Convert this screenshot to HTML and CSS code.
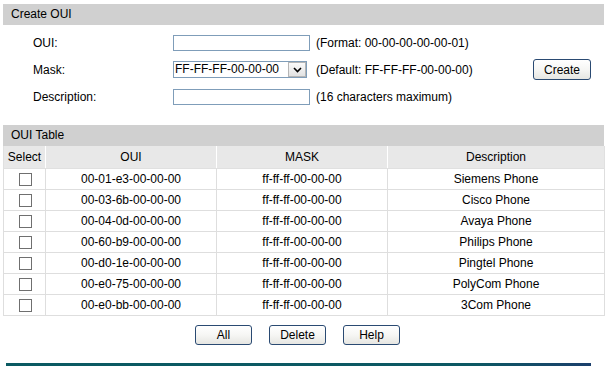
FILE: index.html
```html
<!DOCTYPE html>
<html>
<head>
<meta charset="utf-8">
<title>OUI Config</title>
<link rel="stylesheet" href="styles.css">
</head>
<body>
<div class="page">
  <div class="bar">Create OUI</div>
  <div class="form">
    <label class="lbl">OUI:</label>
    <div><input class="txt" type="text"></div>
    <div class="hint">(Format: 00-00-00-00-00-01)</div>
    <div></div>

    <label class="lbl">Mask:</label>
    <div>
      <span class="select-wrap">
        <select class="sel"><option>FF-FF-FF-00-00-00</option></select>
        <span class="arrow"><svg width="9" height="6" viewBox="0 0 9 6"><path d="M1 1 L4.5 4.5 L8 1" fill="none" stroke="#000" stroke-width="1.6"/></svg></span>
      </span>
    </div>
    <div class="hint">(Default: FF-FF-FF-00-00-00)</div>
    <div><button class="btn btn-create">Create</button></div>

    <label class="lbl">Description:</label>
    <div><input class="txt" type="text"></div>
    <div class="hint">(16 characters maximum)</div>
    <div></div>
  </div>

  <div class="bar">OUI Table</div>
  <table class="tbl">
    <colgroup><col class="c-sel"><col class="c-oui"><col class="c-mask"><col class="c-desc"></colgroup>
    <thead>
      <tr><th>Select</th><th>OUI</th><th>MASK</th><th>Description</th></tr>
    </thead>
    <tbody>
      <tr><td><span class="cb"></span></td><td>00-01-e3-00-00-00</td><td>ff-ff-ff-00-00-00</td><td>Siemens Phone</td></tr>
      <tr><td><span class="cb"></span></td><td>00-03-6b-00-00-00</td><td>ff-ff-ff-00-00-00</td><td>Cisco Phone</td></tr>
      <tr><td><span class="cb"></span></td><td>00-04-0d-00-00-00</td><td>ff-ff-ff-00-00-00</td><td>Avaya Phone</td></tr>
      <tr><td><span class="cb"></span></td><td>00-60-b9-00-00-00</td><td>ff-ff-ff-00-00-00</td><td>Philips Phone</td></tr>
      <tr><td><span class="cb"></span></td><td>00-d0-1e-00-00-00</td><td>ff-ff-ff-00-00-00</td><td>Pingtel Phone</td></tr>
      <tr><td><span class="cb"></span></td><td>00-e0-75-00-00-00</td><td>ff-ff-ff-00-00-00</td><td>PolyCom Phone</td></tr>
      <tr><td><span class="cb"></span></td><td>00-e0-bb-00-00-00</td><td>ff-ff-ff-00-00-00</td><td>3Com Phone</td></tr>
    </tbody>
  </table>

  <div class="actions">
    <button class="btn">All</button>
    <button class="btn">Delete</button>
    <button class="btn">Help</button>
  </div>

  <div class="rule"></div>
</div>
</body>
</html>
```

FILE: styles.css
```css
html, body {
  margin: 0;
  padding: 0;
  background: #fff;
}
body {
  font-family: "Liberation Sans", Arial, sans-serif;
  font-size: 12px;
  color: #000;
}
.page {
  width: 601px;
  padding: 4px 4px 0 3px;
}
.bar {
  background: #d0d0d0;
  height: 21px;
  line-height: 21px;
  padding-left: 8px;
}
.form {
  display: grid;
  grid-template-columns: 140px 143px 217px 58px;
  grid-auto-rows: 27px;
  align-items: center;
  padding: 4px 0 0 30px;
  margin-bottom: 15px;
}
.lbl {
  display: block;
}
.txt {
  display: block;
  box-sizing: border-box;
  width: 137px;
  height: 16px;
  border: 1px solid #7f9db9;
  padding: 0 2px;
  margin: 0;
  font: inherit;
  background: #fff;
}
.select-wrap {
  position: relative;
  display: block;
  width: 134px;
  height: 17px;
}
.sel {
  appearance: none;
  -webkit-appearance: none;
  box-sizing: border-box;
  width: 134px;
  height: 17px;
  border: 1px solid #7f9db9;
  border-radius: 0;
  padding: 0 0 0 1px;
  margin: 0;
  font: inherit;
  color: #000;
  background: #fff;
  line-height: 15px;
}
.arrow {
  position: absolute;
  right: 1px;
  top: 1px;
  width: 18px;
  height: 15px;
  box-sizing: border-box;
  border: 1px solid #b5b5b5;
  background: linear-gradient(#fafafa, #e2e2e2);
  display: flex;
  align-items: center;
  justify-content: center;
}
.arrow svg {
  display: block;
}
.hint {
  white-space: nowrap;
}
.btn {
  box-sizing: border-box;
  width: 57px;
  height: 20px;
  border: 1px solid #2a4a72;
  border-radius: 3px;
  background: linear-gradient(#ffffff 0%, #f6f6f4 50%, #e6e6e2 100%);
  font-family: "Liberation Sans", Arial, sans-serif;
  font-size: 12px;
  color: #000;
  padding: 0;
  margin: 0;
}
.btn-create {
  width: 58px;
  height: 21px;
}
.tbl {
  width: 601px;
  border-collapse: collapse;
  table-layout: fixed;
}
.c-sel { width: 42px; }
.c-oui { width: 171px; }
.c-mask { width: 171px; }
.c-desc { width: 217px; }
.tbl th {
  background: #e8e8e8;
  font-weight: normal;
  height: 22px;
  padding: 0;
  border-left: 1px solid #fff;
  border-right: 1px solid #fff;
  border-bottom: 1px solid #e0e0e0;
  text-align: center;
}
.tbl th:first-child {
  border-left: 1px solid #e0e0e0;
}
.tbl th:last-child {
  border-right: 1px solid #e0e0e0;
}
.tbl td {
  height: 20px;
  padding: 0;
  border: 1px solid #dedede;
  text-align: center;
}
.cb {
  display: inline-block;
  box-sizing: border-box;
  width: 13px;
  height: 13px;
  border: 1px solid #6f6f6f;
  background: #fff;
  vertical-align: middle;
  margin-left: 1px;
}
.actions {
  display: flex;
  justify-content: center;
  gap: 17px;
  padding: 9px 12px 0 0;
}
.rule {
  margin: 18px 0 0 3px;
  width: 585px;
  height: 3px;
  background: linear-gradient(90deg, #0b5a62 0%, #0c5863 80%, #1b3f6c 100%);
}
```
